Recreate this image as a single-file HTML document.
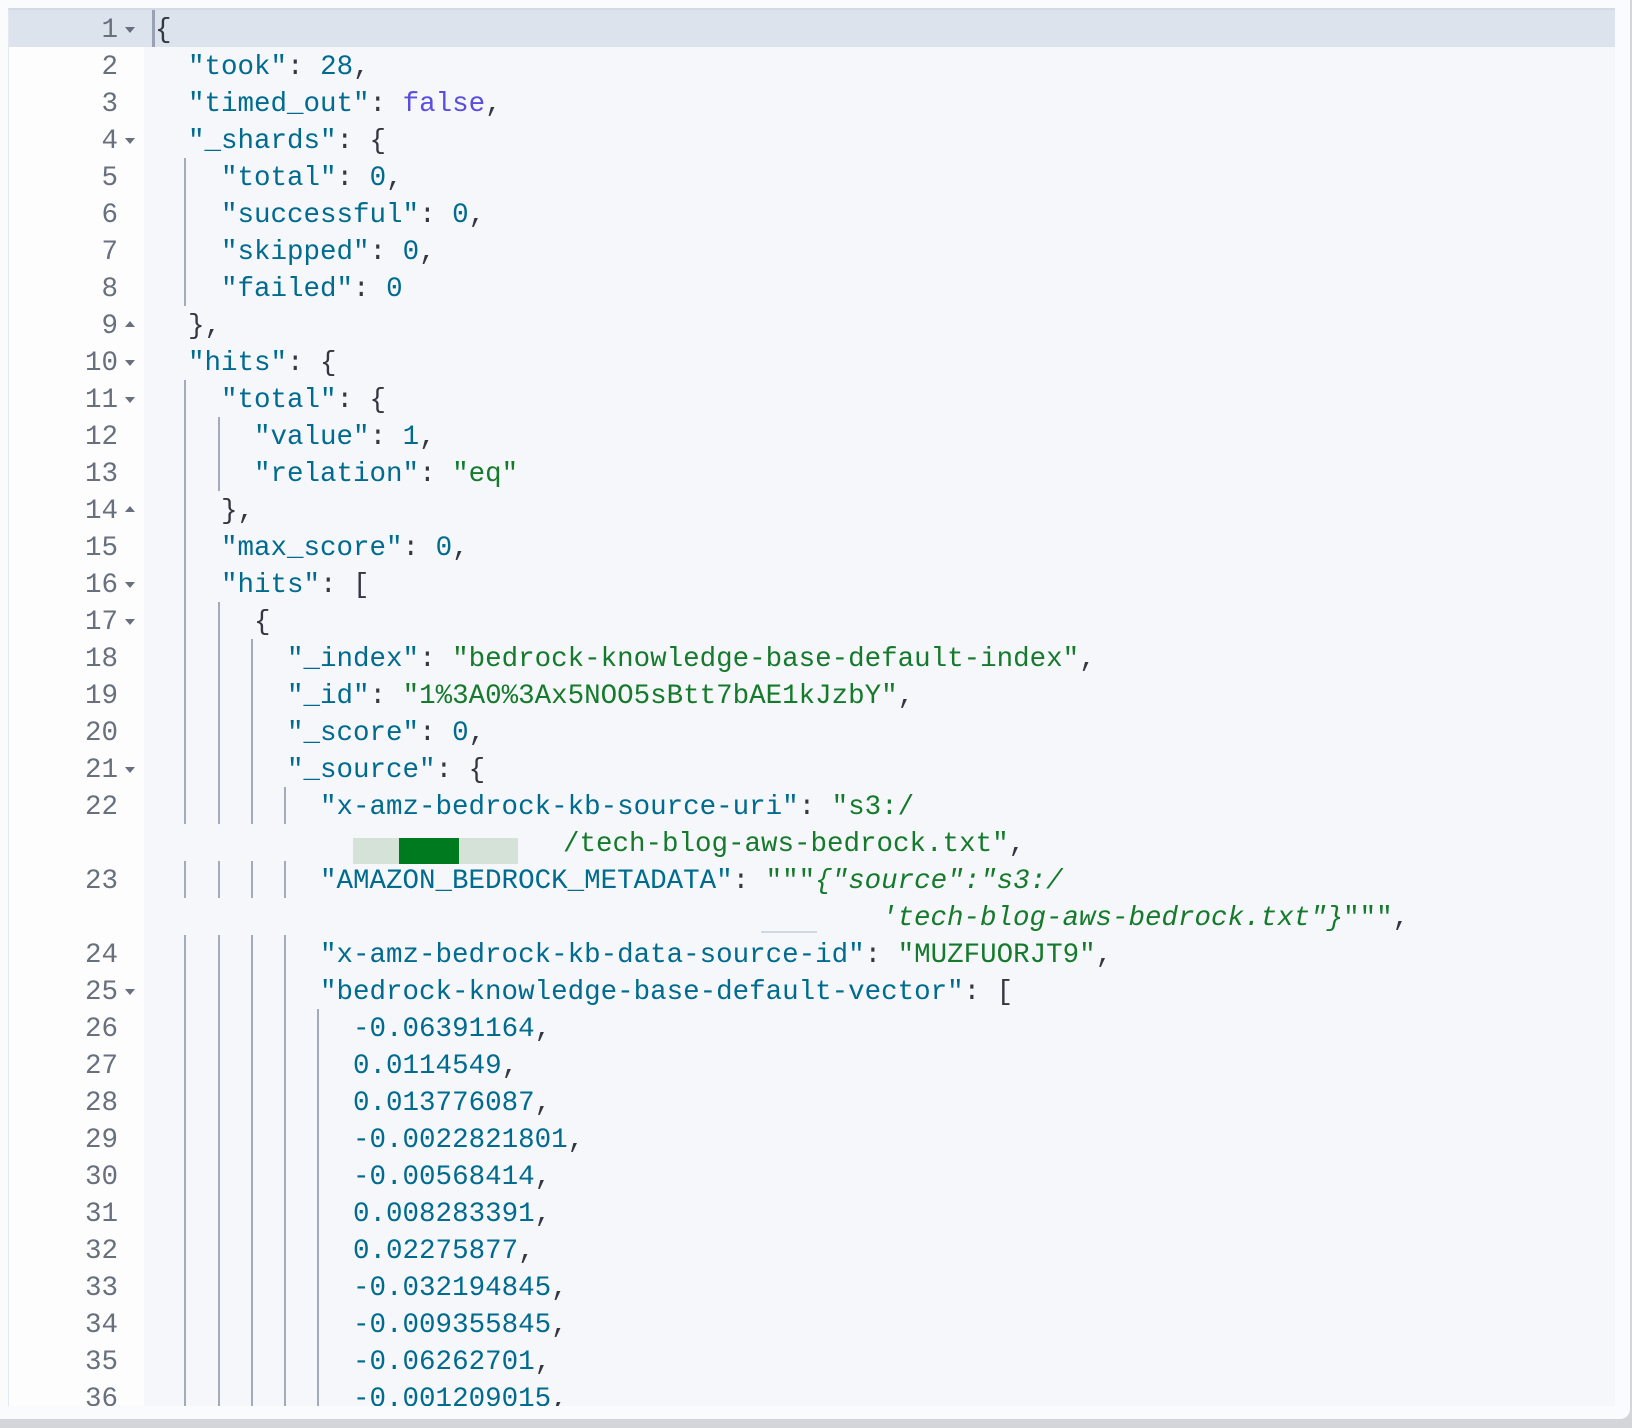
<!DOCTYPE html>
<html><head><meta charset="utf-8"><style>
html,body{margin:0;padding:0}
body{width:1632px;height:1428px;background:#d4d5d8;position:relative;overflow:hidden;font-family:"Liberation Mono",monospace}
.card{position:absolute;left:0;top:0;width:1630px;height:1419px;background:#fafbfd;border-bottom-right-radius:10px}
.ed{position:absolute;left:8px;top:8px;width:1606px;height:1396px;background:#f5f7fa;overflow:hidden;border-top:2px solid #d3dae6;border-left:1px solid #e3e7ee}
.gut{position:absolute;left:0;top:0;width:135px;height:100%;background:#fdfdfe}
.act{position:absolute;left:0;top:0;width:100%;height:37px;background:#dce3ed}
.cur{position:absolute;left:143px;top:0;width:3px;height:37px;background:#98a2b3}
.r{position:absolute;left:0;height:37px;width:100%;font-size:27.5px;line-height:41px;white-space:pre}
.n{position:absolute;left:0;width:109px;text-align:right;color:#69707d}
.f{position:absolute;left:116px;top:17px;width:0;height:0;border-left:5px solid transparent;border-right:5px solid transparent;border-top:6px solid #69707d}
.u{border-top:0;border-bottom:6px solid #69707d;top:15px}
.c{position:absolute;left:146px;color:#343741}
.g{position:absolute;top:0;width:2px;height:37px;background:#a3abbb}
.k{color:#006b8f}.s{color:#157a2c}.m{color:#006b8f}.b{color:#5a4fdc}.i{font-style:italic;color:#157a2c}
</style></head><body>
<div class="card"></div>
<div class="ed">
<div class="gut"></div>
<div class="act"></div>
<div class="cur"></div>
<div class="r" style="top:0"><span class="n">1</span><span class="f"></span><span class="c">{</span></div>
<div class="r" style="top:37px"><span class="n">2</span><span class="c">  <span class="k">"took"</span>: <span class="m">28</span>,</span></div>
<div class="r" style="top:74px"><span class="n">3</span><span class="c">  <span class="k">"timed_out"</span>: <span class="b">false</span>,</span></div>
<div class="r" style="top:111px"><span class="n">4</span><span class="f"></span><span class="c">  <span class="k">"_shards"</span>: {</span></div>
<div class="r" style="top:148px"><span class="n">5</span><i class="g" style="left:175px"></i><span class="c">    <span class="k">"total"</span>: <span class="m">0</span>,</span></div>
<div class="r" style="top:185px"><span class="n">6</span><i class="g" style="left:175px"></i><span class="c">    <span class="k">"successful"</span>: <span class="m">0</span>,</span></div>
<div class="r" style="top:222px"><span class="n">7</span><i class="g" style="left:175px"></i><span class="c">    <span class="k">"skipped"</span>: <span class="m">0</span>,</span></div>
<div class="r" style="top:259px"><span class="n">8</span><i class="g" style="left:175px"></i><span class="c">    <span class="k">"failed"</span>: <span class="m">0</span></span></div>
<div class="r" style="top:296px"><span class="n">9</span><span class="f u"></span><span class="c">  },</span></div>
<div class="r" style="top:333px"><span class="n">10</span><span class="f"></span><span class="c">  <span class="k">"hits"</span>: {</span></div>
<div class="r" style="top:370px"><span class="n">11</span><span class="f"></span><i class="g" style="left:175px"></i><span class="c">    <span class="k">"total"</span>: {</span></div>
<div class="r" style="top:407px"><span class="n">12</span><i class="g" style="left:175px"></i><i class="g" style="left:209px"></i><span class="c">      <span class="k">"value"</span>: <span class="m">1</span>,</span></div>
<div class="r" style="top:444px"><span class="n">13</span><i class="g" style="left:175px"></i><i class="g" style="left:209px"></i><span class="c">      <span class="k">"relation"</span>: <span class="s">"eq"</span></span></div>
<div class="r" style="top:481px"><span class="n">14</span><span class="f u"></span><i class="g" style="left:175px"></i><span class="c">    },</span></div>
<div class="r" style="top:518px"><span class="n">15</span><i class="g" style="left:175px"></i><span class="c">    <span class="k">"max_score"</span>: <span class="m">0</span>,</span></div>
<div class="r" style="top:555px"><span class="n">16</span><span class="f"></span><i class="g" style="left:175px"></i><span class="c">    <span class="k">"hits"</span>: [</span></div>
<div class="r" style="top:592px"><span class="n">17</span><span class="f"></span><i class="g" style="left:175px"></i><i class="g" style="left:209px"></i><span class="c">      {</span></div>
<div class="r" style="top:629px"><span class="n">18</span><i class="g" style="left:175px"></i><i class="g" style="left:209px"></i><i class="g" style="left:242px"></i><span class="c">        <span class="k">"_index"</span>: <span class="s">"bedrock-knowledge-base-default-index"</span>,</span></div>
<div class="r" style="top:666px"><span class="n">19</span><i class="g" style="left:175px"></i><i class="g" style="left:209px"></i><i class="g" style="left:242px"></i><span class="c">        <span class="k">"_id"</span>: <span class="s">"1%3A0%3Ax5NOO5sBtt7bAE1kJzbY"</span>,</span></div>
<div class="r" style="top:703px"><span class="n">20</span><i class="g" style="left:175px"></i><i class="g" style="left:209px"></i><i class="g" style="left:242px"></i><span class="c">        <span class="k">"_score"</span>: <span class="m">0</span>,</span></div>
<div class="r" style="top:740px"><span class="n">21</span><span class="f"></span><i class="g" style="left:175px"></i><i class="g" style="left:209px"></i><i class="g" style="left:242px"></i><span class="c">        <span class="k">"_source"</span>: {</span></div>
<div class="r" style="top:777px"><span class="n">22</span><i class="g" style="left:175px"></i><i class="g" style="left:209px"></i><i class="g" style="left:242px"></i><i class="g" style="left:275px"></i><span class="c">          <span class="k">"x-amz-bedrock-kb-source-uri"</span>: <span class="s">"s3:/</span></span></div>
<div class="r" style="top:814px"><span class="c" style="left:554px"><span class="s">/tech-blog-aws-bedrock.txt"</span>,</span>
<div style="position:absolute;left:344px;top:14px;width:165px;height:26px;background:#d5e2d8"></div>
<div style="position:absolute;left:390px;top:14px;width:60px;height:26px;background:#007a1f"></div></div>
<div class="r" style="top:851px"><span class="n">23</span><i class="g" style="left:175px"></i><i class="g" style="left:209px"></i><i class="g" style="left:242px"></i><i class="g" style="left:275px"></i><span class="c">          <span class="k">"AMAZON_BEDROCK_METADATA"</span>: <span class="s">"""</span><span class="i">{"source":"s3:/</span></span></div>
<div class="r" style="top:888px"><span class="c" style="left:872px"><span class="i">'tech-blog-aws-bedrock.txt"}</span><span class="s">"""</span>,</span>
<div style="position:absolute;left:752px;top:33px;width:56px;height:2px;background:#cfd8e3"></div></div>
<div class="r" style="top:925px"><span class="n">24</span><i class="g" style="left:175px"></i><i class="g" style="left:209px"></i><i class="g" style="left:242px"></i><i class="g" style="left:275px"></i><span class="c">          <span class="k">"x-amz-bedrock-kb-data-source-id"</span>: <span class="s">"MUZFUORJT9"</span>,</span></div>
<div class="r" style="top:962px"><span class="n">25</span><span class="f"></span><i class="g" style="left:175px"></i><i class="g" style="left:209px"></i><i class="g" style="left:242px"></i><i class="g" style="left:275px"></i><span class="c">          <span class="k">"bedrock-knowledge-base-default-vector"</span>: [</span></div>
<div class="r" style="top:999px"><span class="n">26</span><i class="g" style="left:175px"></i><i class="g" style="left:209px"></i><i class="g" style="left:242px"></i><i class="g" style="left:275px"></i><i class="g" style="left:308px"></i><span class="c">            <span class="m">-0.06391164</span>,</span></div>
<div class="r" style="top:1036px"><span class="n">27</span><i class="g" style="left:175px"></i><i class="g" style="left:209px"></i><i class="g" style="left:242px"></i><i class="g" style="left:275px"></i><i class="g" style="left:308px"></i><span class="c">            <span class="m">0.0114549</span>,</span></div>
<div class="r" style="top:1073px"><span class="n">28</span><i class="g" style="left:175px"></i><i class="g" style="left:209px"></i><i class="g" style="left:242px"></i><i class="g" style="left:275px"></i><i class="g" style="left:308px"></i><span class="c">            <span class="m">0.013776087</span>,</span></div>
<div class="r" style="top:1110px"><span class="n">29</span><i class="g" style="left:175px"></i><i class="g" style="left:209px"></i><i class="g" style="left:242px"></i><i class="g" style="left:275px"></i><i class="g" style="left:308px"></i><span class="c">            <span class="m">-0.0022821801</span>,</span></div>
<div class="r" style="top:1147px"><span class="n">30</span><i class="g" style="left:175px"></i><i class="g" style="left:209px"></i><i class="g" style="left:242px"></i><i class="g" style="left:275px"></i><i class="g" style="left:308px"></i><span class="c">            <span class="m">-0.00568414</span>,</span></div>
<div class="r" style="top:1184px"><span class="n">31</span><i class="g" style="left:175px"></i><i class="g" style="left:209px"></i><i class="g" style="left:242px"></i><i class="g" style="left:275px"></i><i class="g" style="left:308px"></i><span class="c">            <span class="m">0.008283391</span>,</span></div>
<div class="r" style="top:1221px"><span class="n">32</span><i class="g" style="left:175px"></i><i class="g" style="left:209px"></i><i class="g" style="left:242px"></i><i class="g" style="left:275px"></i><i class="g" style="left:308px"></i><span class="c">            <span class="m">0.02275877</span>,</span></div>
<div class="r" style="top:1258px"><span class="n">33</span><i class="g" style="left:175px"></i><i class="g" style="left:209px"></i><i class="g" style="left:242px"></i><i class="g" style="left:275px"></i><i class="g" style="left:308px"></i><span class="c">            <span class="m">-0.032194845</span>,</span></div>
<div class="r" style="top:1295px"><span class="n">34</span><i class="g" style="left:175px"></i><i class="g" style="left:209px"></i><i class="g" style="left:242px"></i><i class="g" style="left:275px"></i><i class="g" style="left:308px"></i><span class="c">            <span class="m">-0.009355845</span>,</span></div>
<div class="r" style="top:1332px"><span class="n">35</span><i class="g" style="left:175px"></i><i class="g" style="left:209px"></i><i class="g" style="left:242px"></i><i class="g" style="left:275px"></i><i class="g" style="left:308px"></i><span class="c">            <span class="m">-0.06262701</span>,</span></div>
<div class="r" style="top:1369px"><span class="n">36</span><i class="g" style="left:175px"></i><i class="g" style="left:209px"></i><i class="g" style="left:242px"></i><i class="g" style="left:275px"></i><i class="g" style="left:308px"></i><span class="c">            <span class="m">-0.001209015</span>,</span></div>
</div>
</body></html>
